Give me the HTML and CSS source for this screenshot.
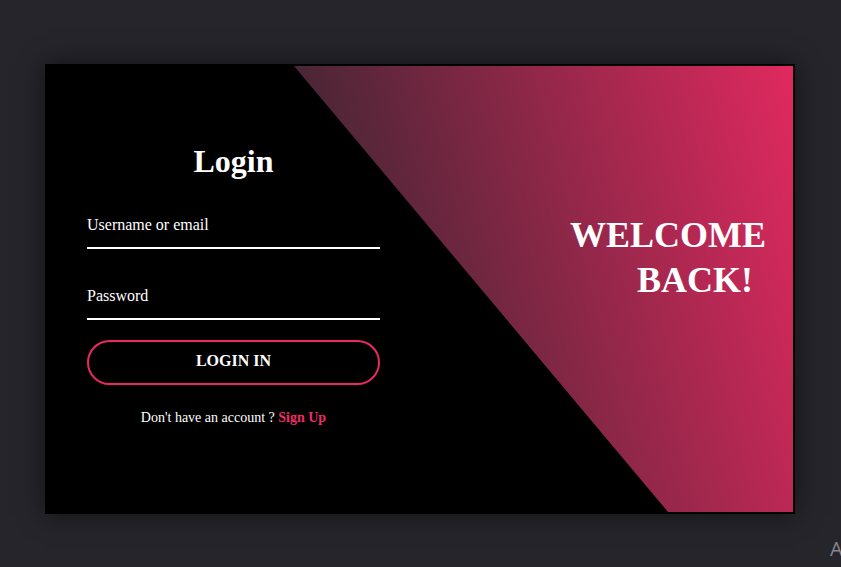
FILE: index.html
```html
<!DOCTYPE html>
<html lang="en">
<head>
<meta charset="utf-8">
<title>Login</title>
<link rel="stylesheet" href="styles.css">
</head>
<body>
<div class="card">
  <div class="form-side">
    <h2 class="title">Login</h2>
    <div class="field field-user"><span class="label">Username or email</span></div>
    <div class="field field-pass"><span class="label">Password</span></div>
    <button class="btn" type="button">LOGIN IN</button>
    <p class="signup">Don't have an account ? <a class="signup-link" href="#">Sign Up</a></p>
  </div>
  <div class="welcome-side">
    <h2 class="welcome"><span class="w1">WELCOME</span><span class="w2">BACK!</span></h2>
  </div>
</div>
<div class="watermark">A</div>
</body>
</html>
```
FILE: styles.css
```css
html, body {
  margin: 0;
  padding: 0;
}
body {
  background: #25252b;
  width: 841px;
  height: 567px;
  overflow: hidden;
  position: relative;
  font-family: "Liberation Serif", "Times New Roman", serif;
  color: #fff;
}
.card {
  position: relative;
  box-sizing: border-box;
  width: 750px;
  height: 450px;
  margin: 64px 0 0 45px;
  border: 2px solid #000;
  background: #000;
  box-shadow: 0 0 24px rgba(0, 0, 0, 0.55);
  display: grid;
  grid-template-columns: 1fr 1fr;
}
.card::before {
  content: "";
  position: absolute;
  top: 0;
  bottom: 0;
  left: 247px;
  right: 0;
  background: linear-gradient(75deg, #25252b, #e0295f);
  clip-path: polygon(0 0, 100% 0, 100% 100%, 374px 100%);
}
.form-side {
  position: relative;
  padding: 77px 40px 0;
  display: flex;
  flex-direction: column;
}
.title {
  margin: 0;
  font-size: 32px;
  line-height: 37px;
  font-weight: bold;
  text-align: center;
}
.field {
  padding-bottom: 12px;
  border-bottom: 2px solid #fff;
}
.field-user {
  margin-top: 35px;
}
.field-pass {
  margin-top: 37px;
}
.label {
  display: block;
  font-size: 16px;
  line-height: 20px;
}
.btn {
  margin-top: 20px;
  height: 45px;
  box-sizing: border-box;
  border: 2px solid #ec2861;
  border-radius: 23px;
  background: transparent;
  color: #fff;
  font-family: "Liberation Serif", "Times New Roman", serif;
  font-size: 16px;
  font-weight: bold;
  padding: 0 0 3px;
}
.signup {
  margin: 23px 0 0;
  font-size: 14px;
  line-height: 20px;
  text-align: center;
}
.signup-link {
  color: #ee2c65;
  font-weight: bold;
  text-decoration: none;
}
.welcome-side {
  position: relative;
  padding: 147px 27px 0 0;
}
.welcome {
  margin: 0;
  font-size: 36px;
  line-height: 45px;
  font-weight: bold;
  display: flex;
  flex-direction: column;
  align-items: flex-end;
}
.w2 {
  margin-right: 13px;
}
.watermark {
  position: absolute;
  left: 830px;
  top: 539px;
  font-family: "Open Sans", "Noto Sans", sans-serif;
  font-size: 20px;
  line-height: 20px;
  color: #85858a;
  white-space: nowrap;
}
```
